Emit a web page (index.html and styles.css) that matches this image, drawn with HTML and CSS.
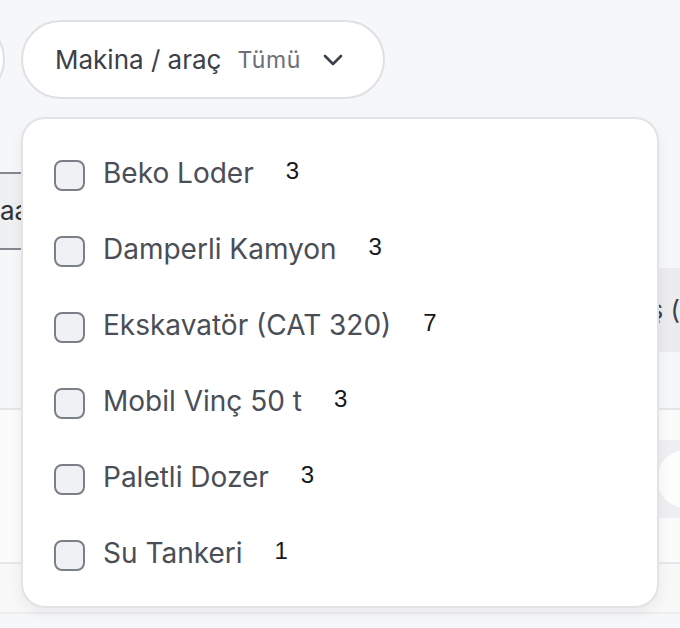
FILE: index.html
```html
<!DOCTYPE html>
<html lang="tr">
<head>
<meta charset="utf-8">
<title>Makina / araç filtresi</title>
<link rel="stylesheet" href="styles.css">
</head>
<body>
<div class="page">
  <div class="toolbar">
    <div class="pill pill-prev"></div>
    <div class="filter">
      <button class="pill pill-main" type="button">
        <span class="pill-label">Makina / araç</span>
        <span class="pill-value">Tümü</span>
        <svg class="chev" width="22" height="14" viewBox="0 0 22 14" aria-hidden="true"><path d="M3 3l8 8 8-8" fill="none" stroke="#3c4048" stroke-width="2.6" stroke-linecap="round" stroke-linejoin="round"/></svg>
      </button>
      <div class="menu">
        <label class="opt"><span class="box"></span><span class="name">Beko Loder</span><span class="count">3</span></label>
        <label class="opt"><span class="box"></span><span class="name">Damperli Kamyon</span><span class="count">3</span></label>
        <label class="opt"><span class="box"></span><span class="name">Ekskavatör (CAT 320)</span><span class="count">7</span></label>
        <label class="opt"><span class="box"></span><span class="name">Mobil Vinç 50 t</span><span class="count">3</span></label>
        <label class="opt"><span class="box"></span><span class="name">Paletli Dozer</span><span class="count">3</span></label>
        <label class="opt"><span class="box"></span><span class="name">Su Tankeri</span><span class="count">1</span></label>
      </div>
    </div>
  </div>

  <div class="search-row">
    <div class="search">aa</div>
  </div>

  <div class="head-row">
    <div class="head-cell">ş (</div>
  </div>

  <div class="body-row">
    <div class="row-band"><span class="knob"></span></div>
  </div>

  <div class="foot-row"></div>
</div>
</body>
</html>
```

FILE: styles.css
```css
html, body {
  margin: 0;
  padding: 0;
}
body {
  background: #f6f7f9;
  font-family: Inter, "Noto Sans", "Liberation Sans", sans-serif;
  color: #3f434a;
  width: 680px;
  height: 628px;
  overflow: hidden;
}
.page {
  width: 680px;
  height: 628px;
  overflow: hidden;
}
.toolbar {
  display: flex;
  gap: 16px;
  padding-top: 20px;
  margin-left: -95px;
  height: 79px;
}
.pill {
  box-sizing: border-box;
  height: 79px;
  border: 2px solid #dfe0e3;
  border-radius: 40px;
  background: #ffffff;
}
.pill-prev {
  width: 100px;
  flex: none;
}
.filter {
  position: relative;
  flex: none;
}
.pill-main {
  display: flex;
  align-items: center;
  width: 364px;
  padding: 0 0 0 32px;
  font-family: inherit;
  cursor: pointer;
}
.pill-label {
  font-size: 26px;
  color: #3c4048;
}
.pill-value {
  margin-left: 16px;
  font-size: 23px;
  letter-spacing: 0.6px;
  color: #6b7079;
}
.chev {
  margin-left: 21px;
}
.menu {
  position: absolute;
  top: 97px;
  left: 0;
  width: 638px;
  height: 491px;
  box-sizing: border-box;
  background: #ffffff;
  border: 2px solid #e2e3e6;
  border-radius: 24px;
  box-shadow: 0 6px 14px rgba(20, 24, 32, 0.06);
  padding: 18px 0 15px 31px;
  z-index: 5;
}
.opt {
  display: flex;
  align-items: center;
  height: 76px;
}
.box {
  box-sizing: border-box;
  width: 31px;
  height: 31px;
  border: 2px solid #7b7f87;
  border-radius: 8px;
  background: #f0f1f4;
  flex: none;
}
.name {
  margin-left: 18px;
  font-size: 28px;
  color: #4a4e56;
  position: relative;
  top: -2px;
}
.count {
  margin-left: 32px;
  font-family: "Liberation Sans", Arial, sans-serif;
  font-size: 24px;
  color: #15171a;
  position: relative;
  top: -4px;
}

.search-row {
  margin-top: 73px;
  height: 78px;
}
.search {
  box-sizing: border-box;
  width: 640px;
  height: 78px;
  border-top: 2px solid #85888e;
  border-bottom: 2px solid #85888e;
  background: #eff0f2;
  font-size: 26px;
  line-height: 74px;
  color: #2e3137;
}
.head-row {
  margin-top: 18px;
  height: 84px;
  display: flex;
  justify-content: flex-end;
}
.head-cell {
  width: 120px;
  background: #ececef;
  font-size: 26px;
  line-height: 84px;
  color: #3c4048;
  text-align: right;
  white-space: nowrap;
  overflow: hidden;
}
.body-row {
  margin-top: 56px;
  height: 152px;
  border-top: 2px solid #e4e5e8;
  border-bottom: 2px solid #e6e7ea;
  background: #fbfbfc;
  display: flex;
  flex-direction: column;
  align-items: flex-end;
}
.row-band {
  margin-top: 30px;
  width: 120px;
  height: 78px;
  background: #efeff2;
  display: flex;
  align-items: center;
  justify-content: flex-end;
}
.knob {
  width: 58px;
  height: 58px;
  border-radius: 50%;
  background: #fdfdfd;
  margin-right: -35px;
}
.foot-row {
  height: 48px;
  border-bottom: 2px solid #ededf0;
  background: #f8f8f9;
}
```
